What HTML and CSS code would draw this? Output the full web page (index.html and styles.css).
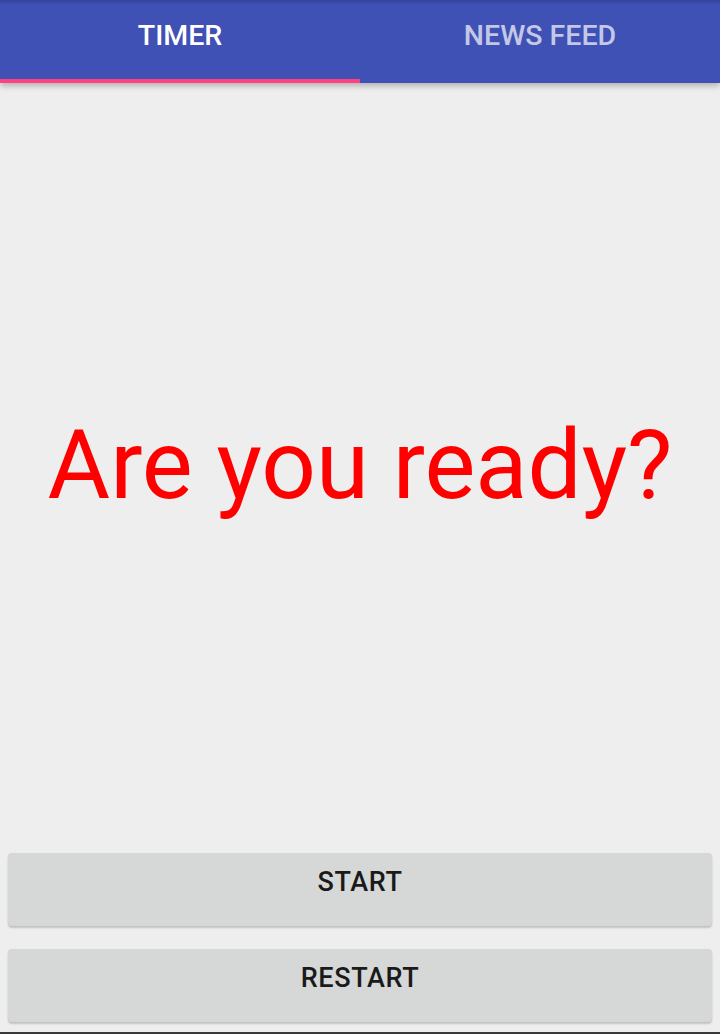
FILE: index.html
```html
<!DOCTYPE html>
<html lang="en">
<head>
<meta charset="utf-8">
<title>Timer</title>
<link rel="stylesheet" href="styles.css">
</head>
<body>
<div class="app">
  <nav class="tabs">
    <div class="tab tab-active">TIMER</div>
    <div class="tab">NEWS FEED</div>
  </nav>
  <main class="content">
    <h1 class="ready">Are you ready?</h1>
  </main>
  <div class="actions">
    <button class="btn">START</button>
    <button class="btn">RESTART</button>
  </div>
  <div class="bottom-edge"></div>
</div>
</body>
</html>
```
FILE: styles.css
```css
html, body {
  margin: 0;
  padding: 0;
  height: 100%;
}
body {
  background: #eeeeee;
  font-family: Roboto, "Noto Sans", sans-serif;
}
.app {
  height: 1034px;
  display: flex;
  flex-direction: column;
}
.tabs {
  position: relative;
  z-index: 1;
  display: flex;
  height: 83px;
  background: linear-gradient(to bottom, #35449a 0px, #3f51b5 5px, #3f51b5 100%);
  box-shadow: 0 3px 6px rgba(0, 0, 0, 0.25);
  flex-shrink: 0;
}
.tab {
  flex: 1;
  display: flex;
  justify-content: center;
  padding-top: 20px;
  box-sizing: border-box;
  font-size: 28.5px;
  font-weight: 500;
  color: rgba(255, 255, 255, 0.7);
  line-height: 32px;
}
.tab-active {
  color: #ffffff;
  border-bottom: 4px solid #ff4081;
}
.content {
  flex: 1;
  display: flex;
  align-items: center;
  justify-content: center;
}
.ready {
  margin: 0 0 6px;
  font-size: 96px;
  font-weight: 400;
  color: #ff0000;
  line-height: 1.17;
}
.actions {
  display: flex;
  flex-direction: column;
  gap: 23px;
  padding: 0 8px 10px;
}
.btn {
  height: 73px;
  border: none;
  border-radius: 4px;
  background: #d6d7d7;
  box-shadow: 0 2px 2px rgba(0, 0, 0, 0.18), 0 0 1px rgba(0, 0, 0, 0.08);
  font-family: Roboto, "Noto Sans", sans-serif;
  font-size: 27px;
  font-weight: 500;
  letter-spacing: 0.6px;
  color: #1a1a1a;
  padding: 0 0 16px;
}
.bottom-edge {
  height: 2px;
  background: #3a3a3a;
  flex-shrink: 0;
}
```
